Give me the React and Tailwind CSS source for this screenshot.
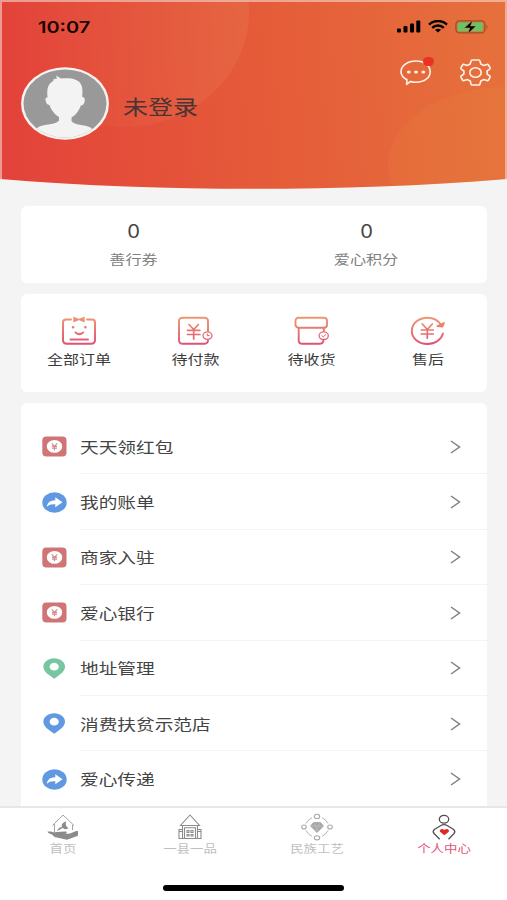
import React, { useState } from "react";

const Stroke = "url(#warm)";

const SignalIcon = () => (
  <svg width="24" height="13" viewBox="0 0 24 13">
    <rect x="0" y="8.4" width="4" height="4" rx="1" />
    <rect x="6.5" y="6" width="4" height="6.4" rx="1" />
    <rect x="13" y="3.4" width="4" height="9" rx="1" />
    <rect x="19.3" y="0.4" width="4" height="12" rx="1" />
  </svg>
);

const WifiIcon = () => (
  <svg width="20" height="13" viewBox="0 0 20 13" fill="none" stroke="#000" strokeWidth="2.4">
    <path d="M1 4.6C6-.2 14-.2 19 4.6" />
    <path d="M4.2 7.8c3.3-3 8.300-3 11.600 0" />
    <path d="M7 9.700q3-2 6 0L10 12.600z" fill="#000" stroke="none" />
  </svg>
);

const BatteryIcon = () => (
  <svg width="34" height="14" viewBox="0 0 34 14">
    <rect x="0.9" y="0.9" width="29" height="12" rx="3.500" fill="none" stroke="#9a4f27" strokeWidth="1.300" />
    <path d="M31.500 4.800q2 2.200 0 4.400z" fill="#9a4f27" />
    <rect x="2.700" y="2.500" width="25" height="8.800" rx="1.600" fill="#65c466" />
    <path d="M17.800 0.300L9.300 8h5.500l-2 5.700L21 6h-5.500z" fill="#000" stroke="#e0804a" strokeWidth="0.500" />
  </svg>
);

const MessageIcon = () => (
  <svg width="32" height="26" viewBox="0 0 32 26" fill="none" stroke="#fff3ea" strokeWidth="1.600">
    <path d="M6.600 24.300L7 19.800C3.500 18 1 15.200 1 11.800 1 5.800 7.500 1 16 1s14.200 4.700 14.200 10.700S24.500 22.200 16 22.200c-2.200 0-4-.3-5.500-.8z" strokeLinejoin="round" />
    <g fill="#fff3ea" stroke="none">
      <ellipse cx="8.800" cy="12" rx="1.900" ry="1.600" />
      <ellipse cx="16" cy="12" rx="1.900" ry="1.600" />
      <ellipse cx="23.300" cy="12" rx="1.900" ry="1.600" />
    </g>
  </svg>
);

const GearIcon = () => (
  <svg width="31" height="27" viewBox="0 0 31 27" fill="none" stroke="#fff3ea" strokeWidth="1.600" strokeLinejoin="round">
    <path d="M12.200 1h6.600q1 0 1.200 1l.8 3 2.700 1.400 3.500-1q1-.2 1.500.6l1.500 2.600q.4.900-.3 1.500L27.100 12v3l2.600 1.900q.7.600.3 1.500l-1.500 2.600q-.5.800-1.500.6l-3.500-1-2.700 1.400-.8 3q-.2 1-1.200 1h-6.600q-1 0-1.200-1l-.8-3-2.700-1.400-3.500 1q-1 .2-1.500-.6L1 18.400q-.4-.9.300-1.500L3.900 15v-3l-2.600-1.900Q.6 9.500 1 8.600L2.500 6q.5-.8 1.500-.6l3.500 1L10.200 5l.8-3q.2-1 1.200-1z" />
    <ellipse cx="15.500" cy="13.500" rx="5.700" ry="4.800" />
  </svg>
);

const Avatar = () => (
  <svg width="88" height="73" viewBox="0 0 88 73">
    <defs>
      <clipPath id="face">
        <ellipse cx="44" cy="36.500" rx="41.500" ry="34" />
      </clipPath>
    </defs>
    <ellipse cx="44" cy="36.500" rx="44" ry="36.300" fill="#f7f1ef" />
    <ellipse cx="44" cy="36.500" rx="41.500" ry="34" fill="#999" />
    <g clipPath="url(#face)" fill="#f3f3f3">
      <path d="M26.500 30c-1-9 1-13 5.500-16l1-1.500-2 0 5-1-1-3 5 3c11-1 17 1 19.500 5 2 3 2.200 6.500 1.700 13.500 2.500 0 3 2 2.300 5-.7 2.500-1.800 3.500-3.700 3.500-2 6-5.300 9.500-9.300 12v3.500c3 4.500 13 3.500 19 6.500 2 1.500 2.500 4 3 7v12H13V68c0-3 2-6.500 4.500-8 6-3 17-2 20.500-6.500v-3.500c-4-2.500-7.500-6-9.500-12-1.700 0-2.900-1-3.700-3.500-.8-3-.1-4.500 1.700-4z" />
    </g>
  </svg>
);

const OrderIcon = () => (
  <svg width="36" height="30" viewBox="0 0 36 30" fill="none" stroke={Stroke} strokeWidth="2" strokeLinecap="round">
    <path d="M10 3.500H5Q2 3.500 2 6.500V24q0 3.800 4 3.800h24q4 0 4-3.800V6.500q0-3-3-3h-5" />
    <path d="M13 1.500l5 2 5-2v4l-5-2-5 2z" strokeWidth="1.300" fill={Stroke} />
    <path d="M14.500 16.500q3.800 3.300 7.600 0M9.500 23.500H27" />
    <path d="M12 11.200h.2M24.300 11.200h.2" strokeWidth="2.500" />
  </svg>
);

const PayIcon = () => (
  <svg width="36" height="30" viewBox="0 0 36 30" fill="none" stroke={Stroke} strokeWidth="1.900" strokeLinecap="round">
    <path d="M31 15V5q0-3.300-4-3.300H6Q2 1.700 2 5v19q0 3.800 4 3.800h21q3.500 0 4-3" />
    <path d="M12 8.500l4.700 5 4.700-5M16.700 13.500V23M10.500 14.300h12.400M10.500 18.500h12.400" strokeWidth="1.700" />
    <ellipse cx="30.500" cy="19.600" rx="4.500" ry="3.800" fill="#fff" strokeWidth="1.300" />
    <path d="M30.300 17.800v2l2-.5" strokeWidth="1" />
  </svg>
);

const ReceiveIcon = () => (
  <svg width="36" height="30" viewBox="0 0 36 30" fill="none" stroke={Stroke} strokeWidth="1.900" strokeLinecap="round">
    <rect x="1.500" y="1.700" width="31.500" height="10" rx="3" />
    <path d="M4.700 12V24.500q0 3.300 4 3.300H25q4.300 0 4.300-3M29.800 12V15" />
    <ellipse cx="29.700" cy="19.700" rx="4.600" ry="3.800" fill="#fff" strokeWidth="1.300" />
    <path d="M27.800 19.600l1.500 1.300 2.500-2.300" strokeWidth="1" />
  </svg>
);

const ServiceIcon = () => (
  <svg width="36" height="30" viewBox="0 0 36 30" fill="none" stroke={Stroke} strokeWidth="1.900" strokeLinecap="round">
    <path d="M33 17.500C31.500 23.500 25 28 17.500 28 8.600 28 1.800 22.200 1.800 14.900S8.600 1.700 17.500 1.700c6 0 11 2.800 13.500 7.300" />
    <path d="M27.500 10l5 .5 1.500-3.500z" fill={Stroke} strokeLinejoin="round" />
    <path d="M12.300 8l5 5.500 5-5.500M17.300 13.500v8.700M11.300 14h12M11.300 18h12" strokeWidth="1.700" />
  </svg>
);

const PacketIcon = () => (
  <svg width="25" height="21" viewBox="0 0 25 21">
    <rect x="0.300" y="0.500" width="24.200" height="20" rx="4" fill="#d07476" />
    <ellipse cx="12.500" cy="10.400" rx="7.700" ry="6.400" fill="#fff" />
    <path d="M9.800 7.300l2.700 3 2.700-3M12.500 10.300v3.900M9.900 10.400h5.200M9.900 12.200h5.200" fill="none" stroke="#d88a8b" strokeWidth="1.200" />
  </svg>
);

const ShareIcon = () => (
  <svg width="25" height="21" viewBox="0 0 25 21">
    <ellipse cx="12.500" cy="10.500" rx="12.200" ry="10.200" fill="#6099e2" />
    <path d="M13.300 5.300L20.500 10.300l-7.200 4.900v-2.900c-4-.3-6.300.4-8.500 2.500.4-4 3.500-6.500 8.500-6.600z" fill="#fff" />
  </svg>
);

const PinIcon = ({ color }) => (
  <svg width="25" height="21" viewBox="0 0 25 21">
    <path d="M12.200.3c6 0 10.800 3.700 10.800 8.400 0 3.700-3.200 6.600-6.300 8.700L12.200 20.800l-4.500-3.400C4.500 15.300 1.400 12.400 1.400 8.700 1.400 4 6.200.3 12.200.3z" fill={color} />
    <ellipse cx="12.200" cy="8.700" rx="4.600" ry="3.900" fill="#fff" />
  </svg>
);

const HomeIcon = () => (
  <svg width="32" height="28" viewBox="0 0 32 28" fill="none" stroke="#999" strokeWidth="0.900">
    <path d="M5.500 12.500L16 2l11 10.500M7.500 11v8M25.500 12v5" />
    <path d="M19.500 8.500c-3.500.5-5.500 3-4.500 5.500-2 0-4 1.500-5 4l3-1.500c1-1 2-1.500 3-1.500 2 2 4.500 1 5.500 0-2.500-1.500-3.500-4-2-6.500z" fill="#8b8b8b" stroke="none" />
    <path d="M.5 18.500c4-.5 6 1 9 .6l9-.6c2 0 1.500 2-.5 2.500l5-.5 5-2c2-.8 3.300-.6 3 .8v3.500l-11 4-8-1.800c-3-1-5-.5-6-2.500-1.200-2-5-1.500-5.500-4z" fill="#8b8b8b" stroke="none" />
  </svg>
);

const CountyIcon = () => (
  <svg width="26" height="27" viewBox="0 0 26 27" fill="none" stroke="#8d8d8d" strokeWidth="1.100">
    <path d="M13 2L3.500 12.500h19z" />
    <path d="M5.500 13v3.500H2V25.500h22v-9h-3.500V13M1.500 18.500h4M20.500 18.500h4M5.500 16.500v9M20.500 16.500v9M7.500 25V14.800h11V25" />
    <path d="M10 17.500h2v2h-2zM14 17.500h2v2h-2zM10 21.500h2v1.500h-2zM14 21.500h2v1.500h-2z" />
  </svg>
);

const CraftIcon = () => (
  <svg width="32" height="28" viewBox="0 0 32 28" fill="none" stroke="#a9a9a9" strokeWidth="0.900">
    <path d="M5 10.500Q7 6.500 11 4.800M21 4.800Q25 6.500 27 10.500M27 17.500Q25 21.500 21 23.300M11 23.300Q7 21.500 5 17.500" />
    <g fill="#fff" strokeWidth="1.100">
      <ellipse cx="16" cy="3.400" rx="2.700" ry="2.100" />
      <ellipse cx="16" cy="24.800" rx="2.700" ry="2.100" />
      <ellipse cx="3" cy="14" rx="2.300" ry="2" />
      <ellipse cx="29" cy="14" rx="2.300" ry="2" />
    </g>
    <path d="M12.500 9.500h7L22.500 13 16 19.500 9.500 13z" fill="#a5a5a5" />
    <path d="M10 13h12M13.500 10l2.500 8 2.500-8" stroke="#ccc" strokeWidth="0.500" />
  </svg>
);

const UserIcon = () => (
  <svg width="26" height="28" viewBox="0 0 26 28" fill="none" stroke="#505050" strokeWidth="1.300">
    <ellipse cx="13" cy="6.200" rx="4.700" ry="3.900" />
    <path d="M8.700 26.200L3 20.500q-1.700-2 .3-4l6.200-3.800q3.500-2 7 0l6.200 3.800q2 2 .3 4L17.500 26.200" />
    <path d="M13.400 22.300L9 18.700c-1-2.500 2.500-3.700 4.400-1.700 1.900-2 5.400-.8 4.400 1.700z" fill="#de2a22" stroke="none" />
  </svg>
);

const orders = [
  { label: "全部订单", icon: <OrderIcon /> },
  { label: "待付款", icon: <PayIcon /> },
  { label: "待收货", icon: <ReceiveIcon /> },
  { label: "售后", icon: <ServiceIcon /> },
];

const menus = [
  { label: "天天领红包", icon: <PacketIcon /> },
  { label: "我的账单", icon: <ShareIcon /> },
  { label: "商家入驻", icon: <PacketIcon /> },
  { label: "爱心银行", icon: <PacketIcon /> },
  { label: "地址管理", icon: <PinIcon color="#77c6a0" /> },
  { label: "消费扶贫示范店", icon: <PinIcon color="#6099e2" /> },
  { label: "爱心传递", icon: <ShareIcon /> },
];

const tabs = [
  { label: "首页", icon: <HomeIcon /> },
  { label: "一县一品", icon: <CountyIcon /> },
  { label: "民族工艺", icon: <CraftIcon /> },
  { label: "个人中心", icon: <UserIcon /> },
];

const HeaderBackground = () => (
  <svg className="absolute inset-0" width="507" height="192" viewBox="0 0 507 192">
    <defs>
      <linearGradient id="header" gradientUnits="userSpaceOnUse" x1="0" y1="40" x2="507" y2="0">
        <stop offset="0" stopColor="#e3433a" />
        <stop offset="0.500" stopColor="#e55b39" />
        <stop offset="1" stopColor="#e6713c" />
      </linearGradient>
      <linearGradient id="bubble" x1="0" y1="0" x2="1" y2="0">
        <stop offset="0.100" stopColor="#e88a60" stopOpacity="0" />
        <stop offset="1" stopColor="#e88a60" stopOpacity="0.220" />
      </linearGradient>
      <linearGradient id="warm" gradientUnits="userSpaceOnUse" x1="0" y1="0" x2="0" y2="30">
        <stop offset="0" stopColor="#ee9a70" />
        <stop offset="1" stopColor="#e04d75" />
      </linearGradient>
      <clipPath id="curve">
        <path d="M0 0H507V179C420 186 340 188.800 253 188.800S87 186 0 179z" />
      </clipPath>
    </defs>
    <g clipPath="url(#curve)">
      <rect width="507" height="192" fill="url(#header)" />
      <ellipse cx="124" cy="12" rx="125" ry="115" fill="url(#bubble)" />
      <ellipse cx="505" cy="165" rx="117" ry="78" fill="#e99040" fillOpacity="0.160" />
      <path d="M1 180V1H506V180" fill="none" stroke="#f6d5cf" strokeOpacity="0.600" strokeWidth="2" />
    </g>
  </svg>
);

const App = () => {
  const [activeTab, setActiveTab] = useState("个人中心");

  return (
    <div className="w-[507px] h-[900px] flex flex-col overflow-hidden bg-[#f4f4f4] text-[#444] font-['Noto_Sans_CJK_SC',sans-serif]">
      {/* 顶部 */}
      <div className="relative h-[206px] shrink-0">
        <HeaderBackground />
        <div className="relative flex justify-between pl-[38px] pr-[18px] pt-[17px] h-[54px]">
          <div className="h-5 leading-5 text-[16.500px] font-semibold text-[#1a0503] origin-left scale-x-[1.210] font-['Inter',sans-serif]">
            10:07
          </div>
          <div className="flex items-center gap-[7px] h-[19px]">
            <SignalIcon />
            <WifiIcon />
            <BatteryIcon />
          </div>
        </div>
        <div className="relative flex justify-between pl-[21px] pr-4">
          <div className="flex items-center pt-[13px]">
            <Avatar />
            <div className="ml-[14px] mt-[5px] text-[20.500px] leading-8 origin-left scale-x-[1.220] text-[#4a3433]">
              未登录
            </div>
          </div>
          <div className="flex gap-[28px] pt-[5px]">
            <div className="relative h-[26px] pt-px">
              <MessageIcon />
              <div className="absolute -top-[2px] -right-[2px] w-[11px] h-[9px] rounded-full bg-[#ea3323]" />
            </div>
            <GearIcon />
          </div>
        </div>
      </div>

      {/* 积分 */}
      <div className="ml-[21px] mr-5 h-[77px] shrink-0 flex rounded-md bg-white">
        {["善行券", "爱心积分"].map((label) => (
          <div key={label} className="flex-1 flex flex-col items-center pt-[14px] pr-2">
            <div className="text-[18px] leading-6 scale-x-[1.120] font-['Inter',sans-serif]">0</div>
            <div className="mt-[5px] text-[13px] leading-5 scale-x-[1.240] text-[#808080]">{label}</div>
          </div>
        ))}
      </div>

      {/* 订单 */}
      <div className="ml-[21px] mr-5 mt-[11px] h-[98px] shrink-0 flex rounded-md bg-white">
        {orders.map((item) => (
          <div key={item.label} className="flex-1 flex flex-col items-center pt-[22px] pr-px">
            {item.icon}
            <div className="mt-[3px] text-[13px] leading-5 scale-x-[1.230] text-[#3c3c3c]">{item.label}</div>
          </div>
        ))}
      </div>

      {/* 菜单 */}
      <div className="ml-[21px] mr-5 mt-[11px] pt-4 flex-1 min-h-0 overflow-hidden rounded-t-md bg-white">
        {menus.map((item) => (
          <div key={item.label} className="flex items-center h-[55.400px] pl-[21px]">
            <div className="w-[37.500px]">{item.icon}</div>
            <div className="flex-1 h-full flex items-center justify-between pr-[26px] pt-px border-b border-[#f3f3f3]">
              <div className="-mt-[2px] text-[15.300px] leading-6 origin-left scale-x-[1.220]">{item.label}</div>
              <svg width="11" height="14" viewBox="0 0 11 14" fill="none" stroke="#808080" strokeWidth="1.500">
                <path d="M1 1l8.500 6L1 13" />
              </svg>
            </div>
          </div>
        ))}
      </div>

      {/* 底部导航 */}
      <div className="h-[94px] shrink-0 flex flex-col items-center justify-between pb-[9px] border-t-2 border-[#e7e7e7] bg-white">
        <div className="w-full flex">
          {tabs.map((tab) => (
            <div
              key={tab.label}
              className="flex-1 flex flex-col items-center pt-[5px] cursor-pointer"
              onClick={() => setActiveTab(tab.label)}
            >
              <div className="h-[27px]">{tab.icon}</div>
              <div
                className={`text-[11px] leading-4 scale-x-[1.220] ${
                  activeTab === tab.label ? "text-[#e2557a]" : "text-[#c0c0c0]"
                }`}
              >
                {tab.label}
              </div>
            </div>
          ))}
        </div>
        <div className="w-[181px] h-[6px] rounded-full bg-black" />
      </div>
    </div>
  );
};

export default App;
